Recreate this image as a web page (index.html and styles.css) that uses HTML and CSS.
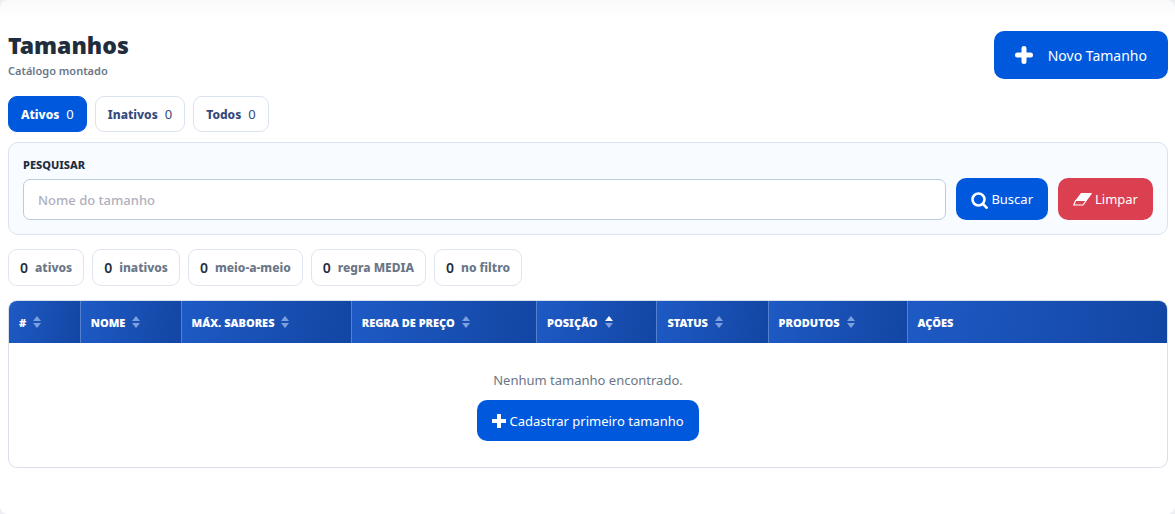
FILE: index.html
```html
<!DOCTYPE html>
<html lang="pt-BR">

<head>
    <meta charset="UTF-8">
    <meta name="viewport" content="width=device-width, initial-scale=1.0">
    <title>Tamanhos</title>
    <link rel="stylesheet" href="styles.css">
</head>

<body>

    <main class="page">

        <!-- Header -->
        <header class="page-header">
            <div>
                <h1>Tamanhos</h1>
                <p class="subtitle">Catálogo montado</p>
            </div>
            <button type="button" class="btn btn-new">
                <svg class="icon-new" viewBox="0 0 18 18" aria-hidden="true"><path d="M9 2.500v13M2.500 9h13" stroke="currentColor" stroke-width="5" stroke-linecap="round"/></svg>
                Novo Tamanho
            </button>
        </header>

        <!-- Tabs -->
        <nav class="tabs">
            <a href="#ativos" class="tab active">Ativos <span>0</span></a>
            <a href="#inativos" class="tab">Inativos <span>0</span></a>
            <a href="#todos" class="tab">Todos <span>0</span></a>
        </nav>

        <!-- Search -->
        <form class="search">
            <div class="field">
                <label for="busca">PESQUISAR</label>
                <input type="text" id="busca" placeholder="Nome do tamanho">
            </div>
            <button type="button" class="btn">
                <svg class="icon-search" viewBox="0 0 17 20" aria-hidden="true"><circle cx="7.500" cy="10.500" r="6" fill="none" stroke="currentColor" stroke-width="2.600"/><path d="M11.500 14.500l5 5" stroke="currentColor" stroke-width="2.600"/></svg>
                Buscar
            </button>
            <button type="reset" class="btn btn-danger">
                <svg class="icon-eraser" viewBox="0 0 19 14" aria-hidden="true"><path d="M8 1h11l-6.500 8H2z" fill="currentColor"/><path d="M2.800 8L.8 13h9.200L18.300 1.500" fill="none" stroke="currentColor" stroke-width="1.200"/></svg>
                Limpar
            </button>
        </form>

        <!-- Summary -->
        <div class="summary">
            <span class="chip"><strong>0</strong> ativos</span>
            <span class="chip"><strong>0</strong> inativos</span>
            <span class="chip"><strong>0</strong> meio-a-meio</span>
            <span class="chip"><strong>0</strong> regra MEDIA</span>
            <span class="chip"><strong>0</strong> no filtro</span>
        </div>

        <!-- Table -->
        <div class="table-box">
            <table>
                <colgroup>
                    <col class="col-id">
                    <col class="col-name">
                    <col class="col-max">
                    <col class="col-rule">
                    <col class="col-position">
                    <col class="col-status">
                    <col class="col-products">
                    <col>
                </colgroup>
                <thead>
                    <tr>
                        <th><span class="sort"># <i></i></span></th>
                        <th><span class="sort">NOME <i></i></span></th>
                        <th><span class="sort">MÁX. SABORES <i></i></span></th>
                        <th><span class="sort">REGRA DE PREÇO <i></i></span></th>
                        <th aria-sort="ascending"><span class="sort asc">POSIÇÃO <i></i></span></th>
                        <th><span class="sort">STATUS <i></i></span></th>
                        <th><span class="sort">PRODUTOS <i></i></span></th>
                        <th>AÇÕES</th>
                    </tr>
                </thead>
                <tbody>
                    <tr>
                        <td colspan="8" class="empty">
                            <p>Nenhum tamanho encontrado.</p>
                            <button type="button" class="btn">
                                <svg class="icon-plus" viewBox="0 0 14 14" aria-hidden="true"><path d="M7 0v14M0 7h14" stroke="currentColor" stroke-width="4"/></svg>
                                Cadastrar primeiro tamanho
                            </button>
                        </td>
                    </tr>
                </tbody>
            </table>
        </div>

    </main>

</body>

</html>
```
FILE: styles.css
```css
* {
    box-sizing: border-box;
}

body {
    margin: 0;
    background: #eceef2;
    color: #1f2d3d;
    font-family: "Noto Sans", "Open Sans", sans-serif;
    font-size: 13px;
}

.page {
    min-height: 100vh;
    padding: 31px 7px 46px 8px;
    background: linear-gradient(#fafafa, #fff 20px);
    border-radius: 8px;
}

/* Header */
.page-header {
    display: flex;
    justify-content: space-between;
    align-items: center;
    margin-bottom: 17px;
}

h1 {
    margin: 0 0 3px;
    font-size: 23px;
    line-height: 29px;
    font-weight: 900;
}

.subtitle {
    margin: 0;
    color: #6b7688;
    font-size: 11px;
    line-height: 16px;
    font-weight: 600;
}

.btn {
    display: inline-flex;
    align-items: center;
    gap: 3px;
    height: 42px;
    padding: 0 15px;
    border: none;
    border-radius: 10px;
    background: #0059dd;
    color: #fff;
    font-family: inherit;
    font-size: 13px;
    font-weight: 400;
    white-space: nowrap;
    cursor: pointer;
}

.btn-new {
    height: 48px;
    padding: 0 21px;
    gap: 15px;
    font-size: 14px;
}

.btn-danger {
    background: #db4050;
}

.icon-new {
    width: 18px;
    height: 18px;
}

.icon-search {
    width: 17px;
    height: 20px;
}

.icon-eraser {
    width: 19px;
    height: 14px;
}

.icon-plus {
    width: 14px;
    height: 14px;
}

/* Tabs */
.tabs {
    display: flex;
    gap: 8px;
    margin-bottom: 10px;
}

.tab {
    display: flex;
    align-items: center;
    gap: 7px;
    height: 36px;
    padding: 0 12px;
    border: 1px solid #dbe3f0;
    border-radius: 9px;
    background: #fff;
    color: #354a7c;
    font-size: 12px;
    font-weight: 800;
    text-decoration: none;
}

.tab span {
    font-size: 13px;
    font-weight: 400;
}

.tab.active {
    border-color: #0059dd;
    background: #0059dd;
    color: #fff;
}

/* Search */
.search {
    display: flex;
    align-items: flex-end;
    gap: 10px;
    margin-bottom: 14px;
    padding: 14px;
    border: 1px solid #dbe3f0;
    border-radius: 10px;
    background: #f8fbff;
}

.field {
    flex: 1;
}

.field label {
    display: block;
    margin-bottom: 6px;
    font-size: 11px;
    line-height: 16px;
    font-weight: 800;
}

.field input {
    display: block;
    width: 100%;
    height: 41px;
    padding: 0 14px;
    border: 1px solid #bccbdd;
    border-radius: 7px;
    background: #fff;
    font-family: inherit;
    font-size: 13px;
    font-weight: 500;
}

.field input::placeholder {
    color: #b0b0bd;
}

/* Summary */
.summary {
    display: flex;
    gap: 8px;
    margin-bottom: 14px;
}

.chip {
    display: flex;
    align-items: center;
    gap: 7px;
    height: 37px;
    padding: 0 11px;
    border: 1px solid #dfe5ee;
    border-radius: 9px;
    color: #6b7688;
    font-size: 12px;
    font-weight: 800;
}

.chip strong {
    color: #1f2d3d;
    font-size: 14px;
    font-weight: 600;
}

/* Table */
.table-box {
    overflow: hidden;
    border: 1px solid #d9e0ec;
    border-radius: 9px;
}

table {
    width: 100%;
    border-collapse: separate;
    border-spacing: 0;
    table-layout: fixed;
}

.col-id {
    width: 6.2%;
}

.col-name {
    width: 8.7%;
}

.col-max {
    width: 14.7%;
}

.col-rule {
    width: 16%;
}

.col-position {
    width: 10.4%;
}

.col-status {
    width: 9.6%;
}

.col-products {
    width: 12%;
}

th {
    height: 42px;
    padding: 0 10px;
    border-right: 1px solid #5580cd;
    background: linear-gradient(100deg, #1e5ac5, #1346a3);
    color: #fff;
    font-size: 11px;
    font-weight: 900;
    text-align: left;
}

th:last-child {
    border-right: none;
}

.sort {
    display: flex;
    align-items: center;
    gap: 7px;
}

/* Sort arrows */
.sort i {
    display: grid;
    gap: 2px;
}

.sort i::before,
.sort i::after {
    content: "";
    border: 4px solid transparent;
}

.sort i::before {
    border-top: none;
    border-bottom: 5px solid #7d9fe0;
}

.sort i::after {
    border-bottom: none;
    border-top: 5px solid #7d9fe0;
}

.sort.asc i::before {
    border-bottom-color: #fff;
}

.empty {
    padding: 28px 0 26px;
    text-align: center;
}

.empty p {
    margin: 0 0 10px;
    color: #6b7688;
    font-size: 13px;
    line-height: 19px;
}

.empty .btn {
    height: 41px;
}
```
